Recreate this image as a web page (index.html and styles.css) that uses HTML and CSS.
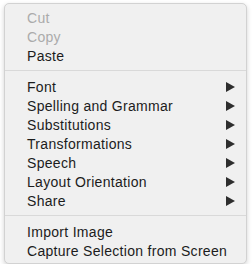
FILE: index.html
```
<!DOCTYPE html>
<html lang="en">
<head>
    <meta charset="UTF-8">
    <title>Context Menu</title>
    <link rel="stylesheet" href="styles.css">
</head>
<body>

    <div class="menu">
        <div class="item disabled">Cut</div>
        <div class="item disabled">Copy</div>
        <div class="item">Paste</div>
        <div class="separator"></div>
        <div class="item sub">Font</div>
        <div class="item sub">Spelling and Grammar</div>
        <div class="item sub">Substitutions</div>
        <div class="item sub">Transformations</div>
        <div class="item sub">Speech</div>
        <div class="item sub">Layout Orientation</div>
        <div class="item sub">Share</div>
        <div class="separator"></div>
        <div class="item">Import Image</div>
        <div class="item">Capture Selection from Screen</div>
    </div>

</body>
</html>
```

FILE: styles.css
```
body {
    margin: 0;
    padding: 3px 0 0 4px;
    background: #ffffff;
    font-family: "Liberation Sans", Arial, sans-serif;
}

.menu {
    width: 241px;
    padding: 4px 0 3px;
    background: #f0f0f0;
    border: 1px solid #d2d2d2;
    border-radius: 5px;
    box-shadow: 0 2px 5px rgba(0, 0, 0, 0.18);
}

.item {
    display: flex;
    align-items: center;
    justify-content: space-between;
    box-sizing: border-box;
    height: 19px;
    padding: 0 11px 0 22px;
    font-size: 14px;
    letter-spacing: 0.3px;
    color: #1c1c1c;
}

.item.disabled {
    color: #ababab;
}

.item.sub::after {
    content: "";
    width: 0;
    height: 0;
    border-top: 5px solid transparent;
    border-bottom: 5px solid transparent;
    border-left: 9px solid #2e2e2e;
}

.separator {
    height: 1px;
    margin: 5px 0 6px;
    background: #d9d9d9;
}
```
